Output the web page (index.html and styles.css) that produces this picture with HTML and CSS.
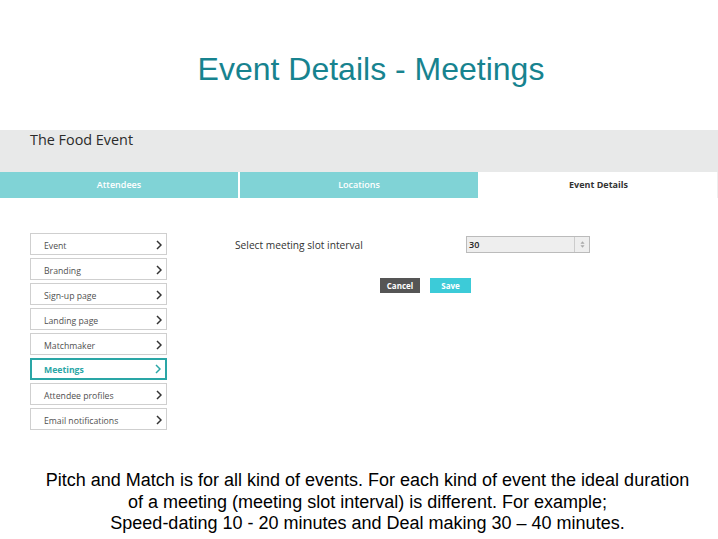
FILE: index.html
```html
<!DOCTYPE html>
<html>
<head>
<meta charset="utf-8">
<link rel="stylesheet" href="styles.css">
</head>
<body>
<h1 class="title">Event Details - Meetings</h1>
<div class="event-bar"><span class="event-name">The Food Event</span></div>
<div class="tabs">
  <div class="tab">Attendees</div>
  <div class="tab">Locations</div>
  <div class="tab tab-active">Event Details</div>
</div>
<div class="main">
  <ul class="sidebar">
    <li class="item">Event<svg class="chev" viewBox="0 0 6 10"><path d="M1 1 L5 5 L1 9"/></svg></li>
    <li class="item">Branding<svg class="chev" viewBox="0 0 6 10"><path d="M1 1 L5 5 L1 9"/></svg></li>
    <li class="item">Sign-up page<svg class="chev" viewBox="0 0 6 10"><path d="M1 1 L5 5 L1 9"/></svg></li>
    <li class="item">Landing page<svg class="chev" viewBox="0 0 6 10"><path d="M1 1 L5 5 L1 9"/></svg></li>
    <li class="item">Matchmaker<svg class="chev" viewBox="0 0 6 10"><path d="M1 1 L5 5 L1 9"/></svg></li>
    <li class="item item-active">Meetings<svg class="chev" viewBox="0 0 6 10"><path d="M1 1 L5 5 L1 9"/></svg></li>
    <li class="item">Attendee profiles<svg class="chev" viewBox="0 0 6 10"><path d="M1 1 L5 5 L1 9"/></svg></li>
    <li class="item">Email notifications<svg class="chev" viewBox="0 0 6 10"><path d="M1 1 L5 5 L1 9"/></svg></li>
  </ul>
  <div class="form">
    <div class="form-row">
      <span class="label">Select meeting slot interval</span>
      <div class="number-input">
        <span class="value">30</span>
        <span class="spinner">
          <svg viewBox="0 0 6 10" class="spin-icon"><path d="M3 1 L5.5 4 L0.5 4 Z"/><path d="M3 9 L5.5 6 L0.5 6 Z"/></svg>
        </span>
      </div>
    </div>
    <div class="actions">
      <button class="btn btn-cancel">Cancel</button>
      <button class="btn btn-save">Save</button>
    </div>
  </div>
</div>
<p class="note">Pitch and Match is for all kind of events. For each kind of event the ideal duration<br>of a meeting (meeting slot interval) is different. For example;<br>Speed-dating 10 - 20 minutes and Deal making 30 &ndash; 40 minutes.</p>
</body>
</html>
```
FILE: styles.css
```css
* { box-sizing: border-box; }
body {
  margin: 0;
  background: #fff;
  font-family: "Open Sans", "DejaVu Sans", sans-serif;
  width: 718px;
  height: 539px;
  overflow: hidden;
}
.title {
  margin: 51px 0 0 0;
  height: 36px;
  line-height: 36px;
  font-family: "Liberation Sans", Arial, sans-serif;
  font-weight: normal;
  font-size: 32px;
  color: #17838f;
  text-align: center;
  padding-left: 24px;
}
.event-bar {
  margin-top: 43px;
  height: 42px;
  background: #e8e9e9;
  padding-left: 30px;
}
.event-name {
  display: block;
  font-size: 14.4px;
  line-height: 20px;
  color: #2b2b2b;
}
.tabs {
  display: grid;
  grid-template-columns: 238px 238px 1fr;
  column-gap: 2px;
  height: 26px;
  background: #fff;
}
.tab {
  background: #80d3d6;
  color: #fff;
  font-size: 9px;
  font-weight: 600;
  display: flex;
  align-items: center;
  justify-content: center;
  padding-bottom: 2px;
}
.tab-active {
  background: #fff;
  color: #333;
  font-weight: 700;
  border-right: 1px solid #eee;
}
.main {
  display: flex;
  margin-top: 35px;
  padding-left: 30px;
}
.sidebar {
  list-style: none;
  margin: 0;
  padding: 0;
  width: 137px;
  display: flex;
  flex-direction: column;
  gap: 3px;
}
.item {
  height: 22px;
  border: 1px solid #cfcfcf;
  padding: 3px 4px 0 13px;
  font-size: 8.7px;
  color: #505050;
  display: flex;
  align-items: center;
  justify-content: space-between;
}
.item-active {
  border: 2px solid #2aa6a6;
  padding-left: 12px;
  padding-top: 2px;
  color: #2aa6a6;
  font-weight: 700;
}
.chev {
  width: 6px;
  height: 10px;
  fill: none;
  stroke: #333;
  stroke-width: 1.5;
  margin-top: -2px;
}
.item-active .chev { stroke: #2aa6a6; }
.form {
  margin-left: 68px;
  padding-top: 3px;
}
.form-row {
  display: flex;
  align-items: center;
}
.label {
  width: 231px;
  font-size: 10.2px;
  color: #333;
}
.number-input {
  width: 124px;
  height: 17px;
  background: #eee;
  border: 1px solid #bbb;
  display: flex;
  align-items: center;
  justify-content: space-between;
}
.value {
  font-size: 9px;
  font-weight: 600;
  color: #222;
  padding-left: 2px;
}
.spinner {
  width: 15px;
  height: 100%;
  border-left: 1px solid #ccc;
  display: flex;
  align-items: center;
  justify-content: center;
}
.spin-icon {
  width: 5px;
  height: 9px;
  fill: #aaa;
}
.actions {
  display: flex;
  gap: 10px;
  margin-top: 25px;
  padding-left: 145px;
}
.btn {
  border: 0;
  height: 15px;
  padding: 0;
  color: #fff;
  font-family: inherit;
  font-size: 8px;
  font-weight: 700;
}
.btn-cancel { width: 40px; background: #555; }
.btn-save { width: 41px; background: #3ccbd8; }
.note {
  margin: 40px 0 0 0;
  font-family: "Liberation Sans", Arial, sans-serif;
  font-size: 18px;
  line-height: 21.5px;
  color: #000;
  text-align: center;
  padding-left: 17px;
}
```
